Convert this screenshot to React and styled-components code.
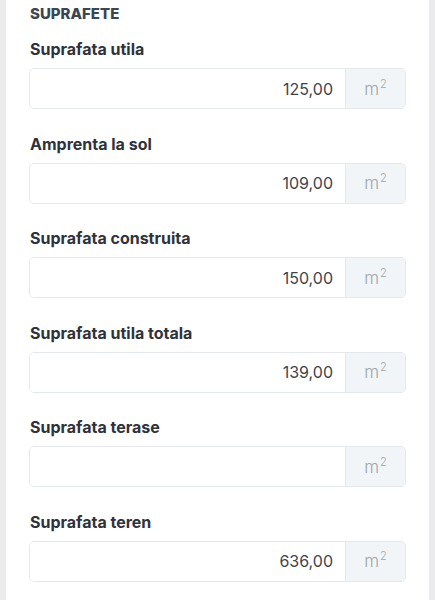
import React from 'react'
import styled, { createGlobalStyle } from 'styled-components'

const GlobalStyle = createGlobalStyle`
  html, body {
    margin: 0;
    padding: 0;
    background: #ebebee;
  }
  body {
    font-family: Inter, "Noto Sans", sans-serif;
  }
`

const fields = [
  { label: 'Suprafata utila', value: '125,00' },
  { label: 'Amprenta la sol', value: '109,00' },
  { label: 'Suprafata construita', value: '150,00' },
  { label: 'Suprafata utila totala', value: '139,00' },
  { label: 'Suprafata terase', value: '' },
  { label: 'Suprafata teren', value: '636,00' },
]

const App = () => {
  return (
    <>
      <GlobalStyle />
      <Card>
        <Title>SUPRAFETE</Title>
        {fields.map((f) => (
          <Field key={f.label}>
            <Label>{f.label}</Label>
            <InputGroup>
              <Input type="text" value={f.value} readOnly />
              <Addon>
                m<sup>2</sup>
              </Addon>
            </InputGroup>
          </Field>
        ))}
      </Card>
    </>
  )
}

export default App

const Card = styled.div`
  margin: 0 6px;
  min-height: 600px;
  background: #ffffff;
  padding: 4px 23px 0 23px;
  box-sizing: border-box;
`
const Title = styled.div`
  font-size: 15px;
  line-height: 20px;
  font-weight: 800;
  color: #3a4651;
  padding-left: 1px;
`
const Field = styled.div`
  margin-top: 14px;
  & + & {
    margin-top: 23.6px;
  }
`
const Label = styled.div`
  font-size: 16px;
  line-height: 22px;
  font-weight: 700;
  color: #2f323a;
  padding-left: 1px;
  margin-bottom: 8px;
`
const InputGroup = styled.div`
  display: flex;
  height: 41px;
  border: 1px solid #e4e8ec;
  border-radius: 5px;
  overflow: hidden;
  box-sizing: border-box;
`
const Input = styled.input`
  flex: 1;
  min-width: 0;
  border: none;
  outline: none;
  text-align: right;
  padding: 0 12px;
  font-family: Inter, "Noto Sans", sans-serif;
  font-size: 16px;
  color: #40444b;
  background: #ffffff;
`
const Addon = styled.div`
  width: 59px;
  display: flex;
  align-items: center;
  justify-content: center;
  background: #f1f5f8;
  border-left: 1px solid #e4e8ec;
  color: #a0a5ab;
  font-size: 17px;
  font-weight: 300;

  sup {
    font-size: 11px;
    line-height: 0;
    position: relative;
    top: -5px;
    margin-left: 1px;
    vertical-align: baseline;
  }
`
